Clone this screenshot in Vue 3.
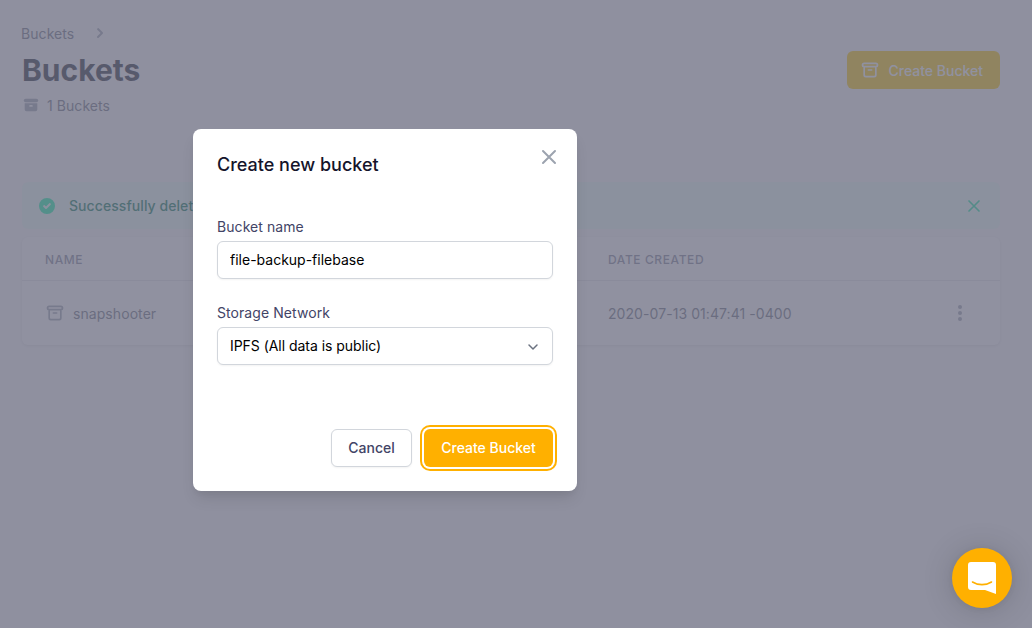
<template>
  <div class="page">
    <div class="crumbs">
      <span>Buckets</span>
      <svg class="crumbs__arrow" viewBox="0 0 20 20" fill="currentColor">
        <path fill-rule="evenodd" d="M7.3 14.7a1 1 0 0 1 0-1.4L10.6 10 7.3 6.7a1 1 0 0 1 1.4-1.4l4 4a1 1 0 0 1 0 1.4l-4 4a1 1 0 0 1-1.4 0z" clip-rule="evenodd" />
      </svg>
    </div>

    <div class="head">
      <div>
        <h1 class="head__title">Buckets</h1>
        <div class="head__count">
          <svg class="head__icon" viewBox="0 0 20 20" fill="currentColor">
            <path d="M4 3a2 2 0 1 0 0 4h12a2 2 0 1 0 0-4H4z" />
            <path fill-rule="evenodd" d="M3 8h14v7a2 2 0 0 1-2 2H5a2 2 0 0 1-2-2V8zm5 3a1 1 0 0 1 1-1h2a1 1 0 1 1 0 2H9a1 1 0 0 1-1-1z" clip-rule="evenodd" />
          </svg>
          <span>1 Buckets</span>
        </div>
      </div>
      <button class="head__btn">
        <svg class="archive" viewBox="0 0 24 24" fill="none" stroke="currentColor" stroke-width="2" stroke-linecap="round" stroke-linejoin="round">
          <path d="M5 8h14M5 8a2 2 0 1 1 0-4h14a2 2 0 1 1 0 4M5 8v10a2 2 0 0 0 2 2h10a2 2 0 0 0 2-2V8m-9 4h4" />
        </svg>
        Create Bucket
      </button>
    </div>

    <div class="alert">
      <svg class="alert__check" viewBox="0 0 20 20" fill="currentColor">
        <path fill-rule="evenodd" d="M10 18a8 8 0 1 0 0-16 8 8 0 0 0 0 16zm3.7-9.3a1 1 0 0 0-1.4-1.4L9 10.6 7.7 9.3a1 1 0 0 0-1.4 1.4l2 2a1 1 0 0 0 1.4 0l4-4z" clip-rule="evenodd" />
      </svg>
      <span class="alert__text">Successfully deleted bucket</span>
      <svg class="alert__close" viewBox="0 0 24 24" fill="none" stroke="currentColor" stroke-width="2" stroke-linecap="round">
        <path d="M6 6l12 12M18 6L6 18" />
      </svg>
    </div>

    <div class="table">
      <div class="table__row table__row--head">
        <span>NAME</span>
        <span>DATE CREATED</span>
        <span></span>
      </div>
      <div class="table__row">
        <div class="table__name">
          <svg class="archive archive--row" viewBox="0 0 24 24" fill="none" stroke="currentColor" stroke-width="2" stroke-linecap="round" stroke-linejoin="round">
            <path d="M5 8h14M5 8a2 2 0 1 1 0-4h14a2 2 0 1 1 0 4M5 8v10a2 2 0 0 0 2 2h10a2 2 0 0 0 2-2V8m-9 4h4" />
          </svg>
          <span>snapshooter</span>
        </div>
        <span>2020-07-13 01:47:41 -0400</span>
        <svg class="table__dots" viewBox="0 0 20 20" fill="currentColor">
          <circle cx="10" cy="4" r="2" />
          <circle cx="10" cy="10" r="2" />
          <circle cx="10" cy="16" r="2" />
        </svg>
      </div>
    </div>

    <div class="overlay">
      <div class="modal">
        <button class="modal__close" aria-label="Close">
          <svg viewBox="0 0 24 24" fill="none" stroke="currentColor" stroke-width="2" stroke-linecap="round">
            <path d="M6 6l12 12M18 6L6 18" />
          </svg>
        </button>
        <h2 class="modal__title">Create new bucket</h2>

        <label class="field">
          <span class="field__label">Bucket name</span>
          <input class="field__input" type="text" value="file-backup-filebase" />
        </label>

        <div class="field field--select">
          <span class="field__label">Storage Network</span>
          <div class="select">
            <span>IPFS (All data is public)</span>
            <svg class="select__chev" viewBox="0 0 20 20" fill="none" stroke="currentColor" stroke-width="1.5" stroke-linecap="round" stroke-linejoin="round">
              <path d="M6 8l4 4 4-4" />
            </svg>
          </div>
        </div>

        <div class="modal__actions">
          <button class="btn btn--cancel">Cancel</button>
          <button class="btn btn--primary">Create Bucket</button>
        </div>
      </div>
    </div>

    <button class="chat" aria-label="Chat">
      <svg viewBox="0 0 28 32" width="28" height="32">
        <path d="M3 0h22a3 3 0 0 1 3 3v29l-11-4H3a3 3 0 0 1-3-3V3a3 3 0 0 1 3-3z" fill="#fff" />
        <path d="M4.500 20c5.500 3.500 13.500 3.500 19 0" fill="none" stroke="#ffb000" stroke-width="1.6" stroke-linecap="round" />
      </svg>
    </button>
  </div>
</template>

<script setup>
</script>

<style>
html,
body {
  margin: 0;
  background: #fafafb;
}
</style>

<style scoped>
.page {
  position: relative;
  height: 628px;
  overflow: hidden;
  box-sizing: border-box;
  padding: 23px 32px 0 22px;
  font-family: Inter, "Liberation Sans", sans-serif;
  font-size: 14px;
  letter-spacing: 0.07px;
  color: #6b7280;
}

.crumbs {
  display: flex;
  align-items: center;
  height: 20px;
  margin-left: -1px;
}

.crumbs__arrow {
  width: 20px;
  height: 20px;
  margin-left: 16px;
  color: #9ca3af;
}

.head {
  display: flex;
  justify-content: space-between;
  align-items: flex-start;
}

.head__title {
  margin: 5px 0 0;
  font-size: 30px;
  line-height: 44px;
  font-weight: 700;
  letter-spacing: normal;
  color: #1f2433;
}

.head__count {
  display: flex;
  align-items: center;
  gap: 7px;
  margin-top: 1px;
  height: 24px;
}

.head__icon {
  width: 18px;
  height: 18px;
  color: #9ca3af;
}

.head__btn {
  display: flex;
  align-items: center;
  gap: 8px;
  height: 38px;
  margin-top: 8px;
  padding: 0 17px 0 13px;
  border: 0;
  border-radius: 6px;
  background: #ffca00;
  color: #fff;
  font: 500 14px Inter, "Liberation Sans", sans-serif;
}

.archive {
  width: 20px;
  height: 20px;
}

.archive--row {
  color: #9ca3af;
}

.alert {
  display: flex;
  align-items: center;
  height: 47px;
  margin-top: 65px;
  padding: 0 16px 0 15px;
  border-radius: 6px;
  background: #ecfdf5;
  color: #047857;
  font-weight: 500;
}

.alert__check {
  width: 20px;
  height: 20px;
  margin-right: 12px;
  color: #10f5a8;
}

.alert__text {
  flex: 1;
}

.alert__close {
  width: 20px;
  height: 20px;
  color: #10e8a0;
}

.table {
  margin-top: 8px;
  border-radius: 6px;
  background: #fff;
  box-shadow: 0 1px 3px rgba(0, 0, 0, 0.1);
}

.table__row {
  display: grid;
  grid-template-columns: 563px 1fr 20px;
  align-items: center;
  box-sizing: border-box;
  height: 64px;
  padding: 0 30px 0 23px;
}

.table__row--head {
  height: 44px;
  padding-top: 2px;
  border-bottom: 1px solid #e5e7eb;
  font-size: 12px;
  font-weight: 500;
  letter-spacing: 0.6px;
  color: #7f8598;
}

.table__name {
  display: flex;
  align-items: center;
  gap: 8px;
}

.table__dots {
  width: 20px;
  height: 20px;
  color: #9ca3af;
}

.overlay {
  position: absolute;
  inset: 0;
  padding: 129px 0 0 193px;
  background: rgba(107, 108, 128, 0.75);
}

.modal {
  position: relative;
  box-sizing: border-box;
  width: 384px;
  height: 362px;
  padding: 24px;
  border-radius: 8px;
  background: #fff;
  box-shadow: 0 10px 15px -3px rgba(0, 0, 0, 0.1), 0 4px 6px -2px rgba(0, 0, 0, 0.05);
}

.modal__close {
  position: absolute;
  top: 16px;
  right: 16px;
  width: 24px;
  height: 24px;
  padding: 0;
  border: 0;
  background: none;
  color: #9ca3af;
}

.modal__title {
  margin: 0;
  font-size: 18px;
  line-height: 24px;
  font-weight: 500;
  letter-spacing: normal;
  color: #15142b;
}

.field {
  display: block;
  margin-top: 40px;
}

.field--select {
  margin-top: 24px;
}

.field__label {
  display: block;
  margin-bottom: 4px;
  line-height: 20px;
  color: #424466;
}

.field__input,
.select {
  display: block;
  box-sizing: border-box;
  width: 100%;
  height: 38px;
  padding: 0 12px 1px;
  border: 1px solid #d2d6dc;
  border-radius: 6px;
  background: #fff;
  font: 14px Inter, "Liberation Sans", sans-serif;
  color: #000;
  box-shadow: 0 1px 2px rgba(0, 0, 0, 0.05);
}

.select {
  display: flex;
  justify-content: space-between;
  align-items: center;
  padding-right: 9px;
  letter-spacing: -0.04px;
}

.select__chev {
  width: 20px;
  height: 20px;
  margin-top: 2px;
  color: #6b7280;
}

.modal__actions {
  display: flex;
  justify-content: flex-end;
  gap: 12px;
  margin-top: 64px;
}

.btn {
  height: 38px;
  padding: 0 0 1px;
  border-radius: 6px;
  font: 500 14px Inter, "Liberation Sans", sans-serif;
}

.btn--cancel {
  width: 81px;
  border: 1px solid #d2d6dc;
  background: #fff;
  color: #424466;
  box-shadow: 0 1px 2px rgba(0, 0, 0, 0.05);
}

.btn--primary {
  width: 129px;
  border: 0;
  background: #ffb000;
  color: #fff;
  box-shadow: 0 0 0 2px #fff, 0 0 0 4px #ffb000;
}

.chat {
  position: absolute;
  right: 20px;
  bottom: 20px;
  display: flex;
  align-items: center;
  justify-content: center;
  width: 60px;
  height: 60px;
  padding: 0;
  border: 0;
  border-radius: 50%;
  background: #ffb000;
  box-shadow: 0 1px 6px rgba(0, 0, 0, 0.06), 0 2px 32px rgba(0, 0, 0, 0.16);
}
</style>
